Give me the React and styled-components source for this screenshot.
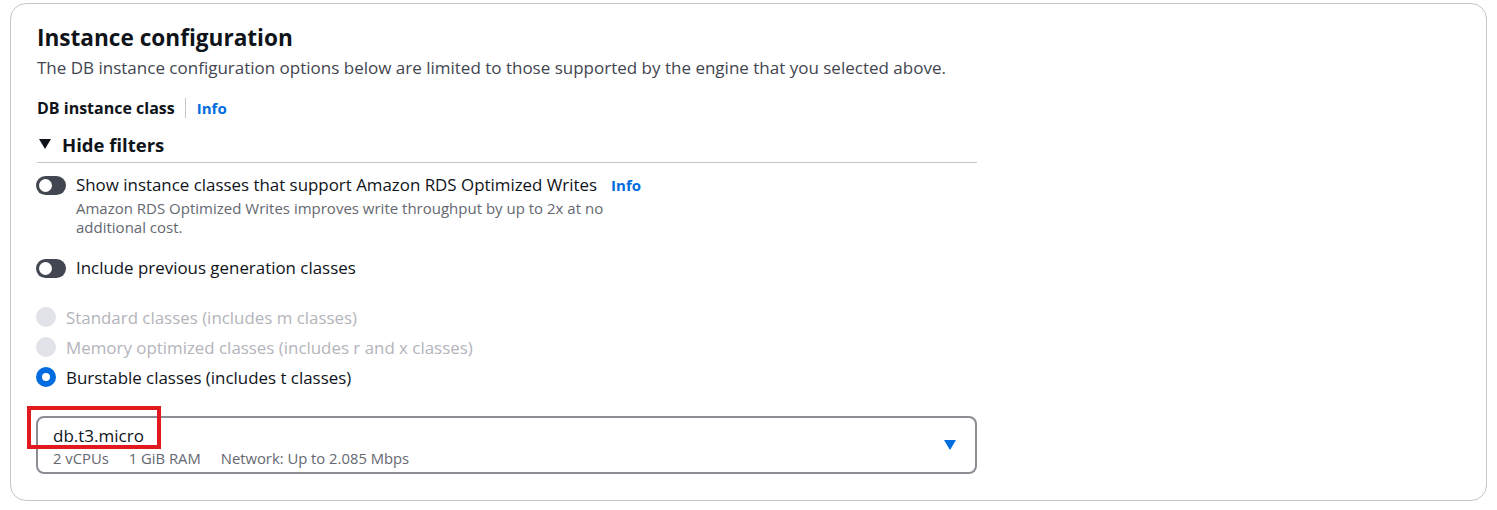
import React from "react";
import styled, { createGlobalStyle } from "styled-components";

const Global = createGlobalStyle`
  html, body { margin: 0; padding: 0; background: #ffffff; }
  body { font-family: "Open Sans", "Noto Sans", sans-serif; color: #0f141a; }
  * { box-sizing: border-box; }
`;

const Page = styled.div`
  padding: 3px 10px 9px 10px;
`;

const Card = styled.section`
  border: 1px solid #c6c6cd;
  border-radius: 16px;
  height: 498px;
  padding: 19px 26px 0 26px;
`;

const Column = styled.div`
  width: 940px;
  display: flex;
  flex-direction: column;
`;

const Title = styled.h2`
  margin: 0;
  font-size: 22.6px;
  line-height: 30px;
  font-weight: 700;
  color: #0f141a;
`;

const Description = styled.p`
  margin: 2px 0 0 0;
  font-size: 17px;
  line-height: 26px;
  color: #424650;
`;

const LabelRow = styled.div`
  display: flex;
  align-items: center;
  margin-top: 15px;
  height: 24px;
`;

const FieldLabel = styled.span`
  font-size: 16px;
  font-weight: 700;
  color: #0f141a;
  padding-right: 10px;
  border-right: 1px solid #c6c6cd;
  line-height: 20px;
`;

const InfoLink = styled.a`
  font-size: 15px;
  font-weight: 700;
  color: #006ce0;
  text-decoration: none;
  margin-left: ${(p) => p.$gap || 11}px;
`;

const ExpandHeader = styled.div`
  display: flex;
  align-items: center;
  gap: 11px;
  margin-top: 11px;
  height: 26px;
  padding-left: 2px;
  font-size: 18.5px;
  font-weight: 700;
  color: #0f141a;
`;

const Caret = styled.svg`
  width: 12px;
  height: 10px;
  fill: ${(p) => p.$color || "#0f141a"};
`;

const Divider = styled.div`
  height: 1px;
  background: #c6c6cd;
  margin-top: 5px;
`;

const ToggleRow = styled.div`
  display: flex;
  align-items: flex-start;
  gap: 10px;
  margin: ${(p) => p.$top}px 0 0 -1px;
`;

const Track = styled.span`
  flex: none;
  width: 30px;
  height: 19px;
  border-radius: 10px;
  background: #424650;
  margin-top: 3px;
  display: flex;
  align-items: center;
  padding-left: 3px;
`;

const Knob = styled.span`
  width: 13px;
  height: 13px;
  border-radius: 50%;
  background: #ffffff;
`;

const ToggleText = styled.div`
  display: flex;
  flex-direction: column;
`;

const ToggleLabel = styled.div`
  display: flex;
  align-items: center;
  font-size: 16.9px;
  line-height: 24px;
  color: #0f141a;
`;

const Hint = styled.div`
  font-size: 15px;
  line-height: 19px;
  color: #656871;
  max-width: 560px;
  margin-top: 2px;
`;

const RadioGroup = styled.div`
  display: flex;
  flex-direction: column;
  margin: 25px 0 0 -1px;
  gap: 6px;
`;

const RadioRow = styled.label`
  display: flex;
  align-items: center;
  gap: 10px;
  height: 24px;
  font-size: 16.9px;
  color: ${(p) => (p.$disabled ? "#b4b4bb" : "#0f141a")};
`;

const RadioDot = styled.span`
  flex: none;
  width: 20px;
  height: 20px;
  border-radius: 50%;
  background: ${(p) => (p.$checked ? "#ffffff" : "#e1e3e8")};
  border: ${(p) => (p.$checked ? "6px solid #006ce0" : "none")};
`;

const SelectWrap = styled.div`
  position: relative;
  margin: 27px 0 0 -1px;
`;

const SelectBox = styled.div`
  border: 2px solid #8c8c94;
  border-radius: 8px;
  height: 58px;
  padding: 6px 16px 0 15px;
  display: flex;
  align-items: flex-start;
  justify-content: space-between;
`;

const SelectText = styled.div`
  display: flex;
  flex-direction: column;
`;

const SelectValue = styled.div`
  font-size: 17px;
  line-height: 24px;
  color: #0f141a;
`;

const SelectMeta = styled.div`
  display: flex;
  gap: 20px;
  font-size: 14.8px;
  line-height: 20px;
  color: #656871;
`;

const SelectCaret = styled(Caret)`
  margin-top: 16px;
  margin-right: 3px;
`;

const Highlight = styled.div`
  position: absolute;
  left: -9px;
  top: -10px;
  width: 134px;
  height: 43px;
  border: 4px solid #e2191f;
  pointer-events: none;
`;

const TriangleDown = ({ color, className }) => (
  <Caret className={className} $color={color} viewBox="0 0 12 10">
    <polygon points="0,0 12,0 6,10" />
  </Caret>
);

const Toggle = () => (
  <Track>
    <Knob />
  </Track>
);

export default function App() {
  return (
    <>
      <Global />
      <Page>
        <Card>
          <Column>
            <Title>Instance configuration</Title>
            <Description>
              The DB instance configuration options below are limited to those supported by the engine that you selected above.
            </Description>
            <LabelRow>
              <FieldLabel>DB instance class</FieldLabel>
              <InfoLink href="#">Info</InfoLink>
            </LabelRow>
            <ExpandHeader>
              <TriangleDown />
              <span>Hide filters</span>
            </ExpandHeader>
            <Divider />
            <ToggleRow $top={10}>
              <Toggle />
              <ToggleText>
                <ToggleLabel>
                  Show instance classes that support Amazon RDS Optimized Writes
                  <InfoLink href="#" $gap={14}>Info</InfoLink>
                </ToggleLabel>
                <Hint>
                  Amazon RDS Optimized Writes improves write throughput by up to 2x at no additional cost.
                </Hint>
              </ToggleText>
            </ToggleRow>
            <ToggleRow $top={19}>
              <Toggle />
              <ToggleText>
                <ToggleLabel>Include previous generation classes</ToggleLabel>
              </ToggleText>
            </ToggleRow>
            <RadioGroup>
              <RadioRow $disabled>
                <RadioDot />
                Standard classes (includes m classes)
              </RadioRow>
              <RadioRow $disabled>
                <RadioDot />
                Memory optimized classes (includes r and x classes)
              </RadioRow>
              <RadioRow>
                <RadioDot $checked />
                Burstable classes (includes t classes)
              </RadioRow>
            </RadioGroup>
            <SelectWrap>
              <SelectBox>
                <SelectText>
                  <SelectValue>db.t3.micro</SelectValue>
                  <SelectMeta>
                    <span>2 vCPUs</span>
                    <span>1 GiB RAM</span>
                    <span>Network: Up to 2.085 Mbps</span>
                  </SelectMeta>
                </SelectText>
                <SelectCaret viewBox="0 0 12 10" $color="#006ce0">
                  <polygon points="0,0 12,0 6,10" />
                </SelectCaret>
              </SelectBox>
              <Highlight />
            </SelectWrap>
          </Column>
        </Card>
      </Page>
    </>
  );
}
